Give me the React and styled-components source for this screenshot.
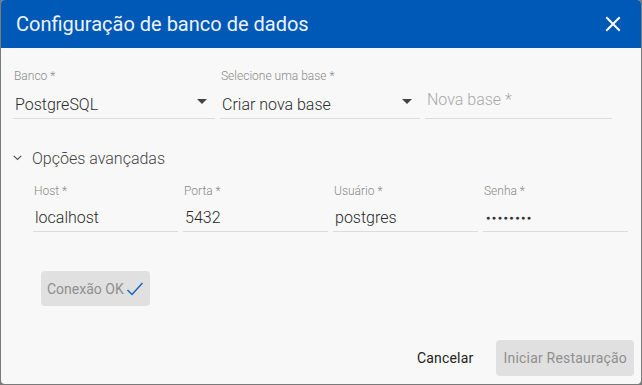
import React from "react";
import styled, { createGlobalStyle } from "styled-components";

const Global = createGlobalStyle`
  html, body { margin: 0; padding: 0; }
  body {
    background: #7a7a7a;
    font-family: Roboto, "Liberation Sans", Arial, sans-serif;
  }
  * { box-sizing: border-box; }
`;

const Page = styled.div`
  width: 642px;
  height: 385px;
  padding: 0 1px 1px 1px;
  background: #7a7a7a;
`;

const Dialog = styled.div`
  width: 640px;
  height: 384px;
  background: #f8f8f8;
  border-radius: 4px;
  overflow: hidden;
  display: flex;
  flex-direction: column;
`;

const Header = styled.div`
  height: 48px;
  flex: none;
  background: #0059b7;
  display: flex;
  align-items: center;
  justify-content: space-between;
  padding: 0 16px 0 15px;
`;

const Title = styled.h1`
  margin: 0;
  font-size: 20px;
  font-weight: 400;
  color: #eef3fb;
`;

const CloseBtn = styled.button`
  border: 0;
  background: transparent;
  padding: 0;
  width: 24px;
  height: 24px;
  display: flex;
  align-items: center;
  justify-content: center;
  cursor: pointer;
`;

const Body = styled.div`
  flex: 1;
  padding: 20px 12px 0 12px;
  display: flex;
  flex-direction: column;
`;

const Row = styled.div`
  display: grid;
  grid-template-columns: ${(p) => p.$cols};
  column-gap: 5px;
  padding-left: ${(p) => p.$indent || 0}px;
`;

const Field = styled.div`
  display: flex;
  flex-direction: column;
`;

const Label = styled.label`
  font-size: 12px;
  line-height: 16px;
  font-weight: 300;
  color: #8a8a8a;
  padding-left: 1px;
`;

const InputLine = styled.div`
  height: ${(p) => p.$h}px;
  border-bottom: 1px solid #dcdcdc;
  display: flex;
  align-items: center;
  justify-content: space-between;
  padding: ${(p) => p.$pt || 0}px 8px 0 2px;
  font-size: 16px;
  font-weight: 300;
  color: ${(p) => (p.$placeholder ? "#a8a8a8" : "#2a2a2a")};
`;

const Placeholder = styled.span`
  margin-top: -4px;
`;

const Caret = styled.span`
  width: 0;
  height: 0;
  border-left: 5px solid transparent;
  border-right: 5px solid transparent;
  border-top: 5px solid #444;
  margin-top: -6px;
`;

const Dots = styled.span`
  font-size: 7px;
  letter-spacing: 1.6px;
  color: #333;
  margin-left: 1px;
`;

const Advanced = styled.div`
  margin-top: 27px;
  height: 24px;
  display: flex;
  align-items: center;
  gap: 10px;
  font-size: 16px;
  font-weight: 300;
  color: #444;
`;

const AdvancedRow = styled(Row)`
  margin-top: 13px;
`;

const TestWrap = styled.div`
  margin-top: 39px;
  padding-left: 28px;
`;

const GreyButton = styled.button`
  border: 0;
  border-radius: 4px;
  background: #e0e0e0;
  color: #8f8f8f;
  font-family: inherit;
  font-size: 14px;
  font-weight: 400;
  letter-spacing: ${(p) => p.$ls || 0}px;
  height: ${(p) => p.$h}px;
  padding: 0 ${(p) => p.$px}px;
  display: inline-flex;
  align-items: center;
  gap: 2px;
`;

const Footer = styled.div`
  margin-top: auto;
  display: flex;
  justify-content: flex-end;
  align-items: center;
  gap: 7px;
  padding: 0 7px 8px 0;
`;

const TextButton = styled.button`
  border: 0;
  background: transparent;
  font-family: inherit;
  font-size: 14px;
  font-weight: 400;
  letter-spacing: 0.2px;
  color: #222;
  height: 36px;
  padding: 0 16px;
`;

function Select({ label, value }) {
  return (
    <Field>
      <Label>{label}</Label>
      <InputLine $h={35} $pt={7}>
        <span>{value}</span>
        <Caret />
      </InputLine>
    </Field>
  );
}

function Text({ label, value, children }) {
  return (
    <Field>
      <Label>{label}</Label>
      <InputLine $h={33} $pt={5}>{children || <span>{value}</span>}</InputLine>
    </Field>
  );
}

export default function App() {
  return (
    <>
      <Global />
      <Page>
        <Dialog>
          <Header>
            <Title>Configuração de banco de dados</Title>
            <CloseBtn aria-label="Fechar">
              <svg width="16" height="16" viewBox="0 0 16 16">
                <path d="M2 2 L14 14 M14 2 L2 14" stroke="#fff" strokeWidth="2" strokeLinecap="square" />
              </svg>
            </CloseBtn>
          </Header>
          <Body>
            <Row $cols="202px 200px 187px">
              <Select label="Banco *" value="PostgreSQL" />
              <Select label="Selecione uma base *" value="Criar nova base" />
              <Field>
                <Label>&nbsp;</Label>
                <InputLine $h={35} $placeholder>
                  <Placeholder>Nova base *</Placeholder>
                </InputLine>
              </Field>
            </Row>
            <Advanced>
              <svg width="9" height="6" viewBox="0 0 9 6">
                <path d="M0.8 0.8 L4.5 4.5 L8.2 0.8" stroke="#555" strokeWidth="1.2" fill="none" />
              </svg>
              <span>Opções avançadas</span>
            </Advanced>
            <AdvancedRow $cols="145px 145px 145px 145px" $indent={20}>
              <Text label="Host *" value="localhost" />
              <Text label="Porta *" value="5432" />
              <Text label="Usuário *" value="postgres" />
              <Text label="Senha *">
                <Dots>●●●●●●●●</Dots>
              </Text>
            </AdvancedRow>
            <TestWrap>
              <GreyButton $h={35} $px={6}>
                Conexão OK
                <svg width="18" height="16" viewBox="0 0 18 16">
                  <path d="M1.5 9 L6 13.5 L16.5 2" stroke="#1565c0" strokeWidth="1.5" fill="none" />
                </svg>
              </GreyButton>
            </TestWrap>
          </Body>
          <Footer>
            <TextButton>Cancelar</TextButton>
            <GreyButton $h={36} $px={7} $ls={0.2}>Iniciar Restauração</GreyButton>
          </Footer>
        </Dialog>
      </Page>
    </>
  );
}
